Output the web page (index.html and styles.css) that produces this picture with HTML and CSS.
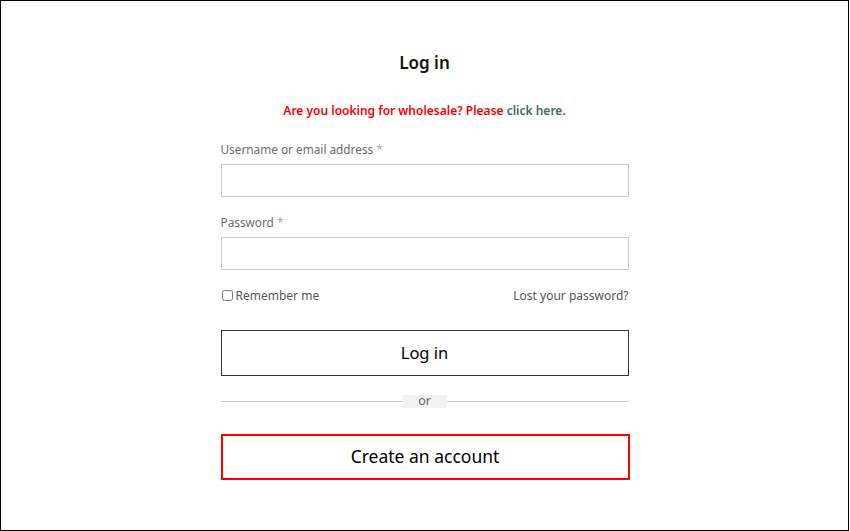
FILE: index.html
```html
<!DOCTYPE html>
<html lang="en">
<head>
    <meta charset="UTF-8">
    <meta name="viewport" content="width=device-width, initial-scale=1.0">
    <title>Log in</title>
    <link rel="stylesheet" href="styles.css">
</head>
<body>
    <div class="login-box">
        <h2>Log in</h2>
        <p class="wholesale">Are you looking for wholesale? Please <a href="#">click here</a>.</p>
        <form class="login-form">
            <label for="username">Username or email address <span class="required">*</span></label>
            <input type="text" id="username">
            <label for="password">Password <span class="required">*</span></label>
            <input type="password" id="password">
            <div class="form-row">
                <label class="remember"><input type="checkbox"> Remember me</label>
                <a href="#" class="lost">Lost your password?</a>
            </div>
            <button type="submit" class="btn-login">Log in</button>
            <div class="divider"><span>or</span></div>
            <button type="button" class="btn-create">Create an account</button>
        </form>
    </div>
</body>
</html>
```

FILE: styles.css
```css
body {
    font-family: "Noto Sans", sans-serif;
    margin: 0;
    width: 849px;
    height: 531px;
    box-sizing: border-box;
    border: 1px solid #000;
    background-color: #fff;
    padding-top: 50px;
}

.login-box {
    width: 408px;
    margin: 0 auto;
}

h2 {
    margin: 0;
    font-size: 17px;
    line-height: 24px;
    font-weight: 600;
    color: #111;
    text-align: center;
}

.wholesale {
    margin: 26px 0 0;
    font-size: 12px;
    line-height: 20px;
    font-weight: 600;
    color: #f00;
    text-align: center;
}

.wholesale a {
    color: #3e6a66;
    text-decoration: none;
}

.login-form {
    display: flex;
    flex-direction: column;
    margin-top: 18px;
}

.login-form > label {
    font-size: 11.8px;
    line-height: 20px;
    color: #6b6b6b;
    margin-bottom: 5px;
}

.required {
    color: #aaa;
}

.login-form > input {
    height: 33px;
    box-sizing: border-box;
    border: 1px solid #ccc;
    margin: 0 0 15px;
    padding: 0 10px;
}

.form-row {
    display: flex;
    justify-content: space-between;
    align-items: center;
    height: 20px;
    font-size: 12px;
    color: #555;
}

.remember {
    display: flex;
    align-items: center;
    gap: 3px;
}

.remember input {
    margin: 0 0 0 1px;
    width: 11px;
    height: 11px;
}

.lost {
    color: #555;
    text-decoration: none;
}

.btn-login,
.btn-create {
    height: 46px;
    background: #fff;
    font-family: inherit;
    font-size: 16.5px;
    color: #000;
    cursor: pointer;
    padding: 0 0 2px;
}

.btn-login {
    margin-top: 25px;
    border: 1px solid #333;
}

.divider {
    display: flex;
    align-items: center;
    margin-top: 19px;
    height: 13px;
}

.divider::before,
.divider::after {
    content: "";
    flex: 1;
    border-top: 1px solid #ccc;
}

.divider span {
    width: 44px;
    height: 13px;
    line-height: 12px;
    background: #f2f2f2;
    font-size: 12.5px;
    color: #666;
    text-align: center;
}

.btn-create {
    margin-top: 26px;
    border: 2px solid #f00;
    width: 409px;
    font-size: 17.5px;
}
```
